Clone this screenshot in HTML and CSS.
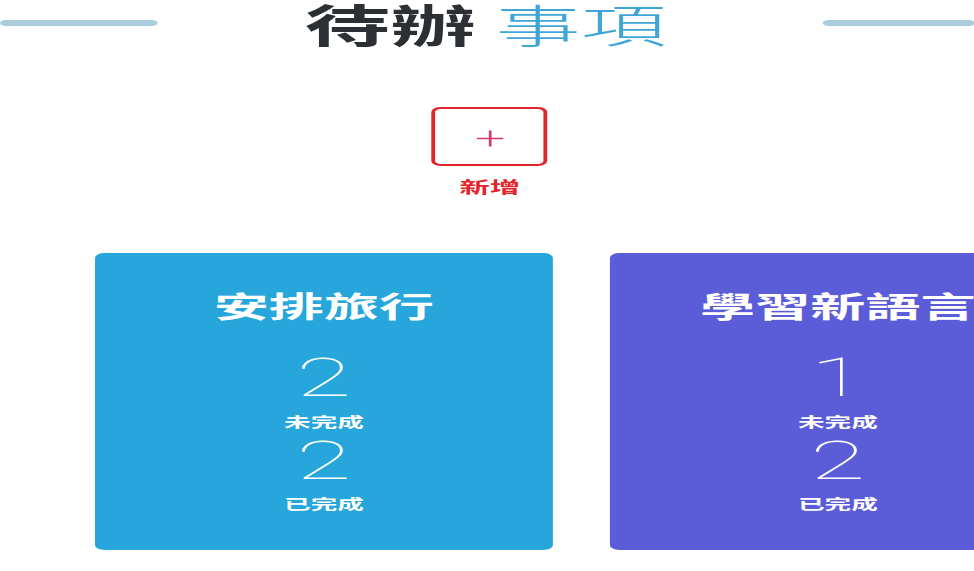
FILE: index.html
```html
<!DOCTYPE html>
<html lang="zh-Hant">
<head>
<meta charset="utf-8">
<title>待辦事項</title>
<link rel="stylesheet" href="styles.css">
</head>
<body>
<div class="stage">
  <header class="hd">
    <span class="rule"></span>
    <h1 class="title"><span class="t-strong">待辦</span> <span class="t-light">事項</span></h1>
    <span class="rule rule-right"></span>
  </header>

  <div class="add">
    <button class="add-btn" type="button" aria-label="新增">
      <svg class="plus" viewBox="0 0 14 17" width="14" height="17">
        <line x1="0" y1="8.5" x2="14" y2="8.5"/>
        <line x1="7" y1="0.5" x2="7" y2="16.5"/>
      </svg>
    </button>
    <div class="add-label">新增</div>
  </div>

  <div class="cards">
    <section class="card card-blue">
      <h2 class="card-title">安排旅行</h2>
      <div class="num">2</div>
      <div class="lbl">未完成</div>
      <div class="num num-2">2</div>
      <div class="lbl lbl-2">已完成</div>
    </section>
    <section class="card card-indigo">
      <h2 class="card-title">學習新語言</h2>
      <div class="num">1</div>
      <div class="lbl">未完成</div>
      <div class="num num-2">2</div>
      <div class="lbl lbl-2">已完成</div>
    </section>
  </div>
</div>
</body>
</html>
```

FILE: styles.css
```css
html, body {
  margin: 0;
  padding: 0;
  background: #ffffff;
  overflow: hidden;
}

body {
  width: 974px;
  height: 571px;
  font-family: "Noto Sans CJK TC", "Noto Sans", sans-serif;
}

.stage {
  width: 512.6px;
  transform: scaleX(1.9);
  transform-origin: 0 0;
}

/* header */
.hd {
  display: flex;
  align-items: center;
  justify-content: space-between;
  height: 46px;
}

.rule {
  display: block;
  width: 83px;
  height: 6px;
  border-radius: 3px;
  background: #a9cddc;
}

.rule-right {
  width: 79.5px;
}

.title {
  margin: 0 5px 0 0;
  padding-top: 1px;
  font-size: 45px;
  line-height: 46px;
  font-weight: 700;
  white-space: nowrap;
}

.t-strong {
  color: #2c3034;
  font-weight: 700;
}

.t-light {
  color: #3fa5d6;
  font-weight: 300;
}

/* add button */
.add {
  display: flex;
  flex-direction: column;
  align-items: center;
  margin-top: 61px;
  padding-left: 3px;
}

.add-btn {
  box-sizing: border-box;
  width: 61px;
  height: 59px;
  padding: 0;
  border: 2px solid #e1262b;
  border-radius: 5px;
  background: #ffffff;
  display: flex;
  align-items: center;
  justify-content: center;
}

.plus {
  display: block;
  stroke: #d8376b;
  stroke-width: 1.4;
  margin-top: 3px;
}

.add-label {
  margin-top: 10px;
  font-size: 16px;
  line-height: 20px;
  font-weight: 700;
  color: #e1262b;
}

/* cards */
.cards {
  display: flex;
  gap: 29.5px;
  margin-top: 57px;
  padding-left: 50px;
}

.card {
  flex: 0 0 241px;
  box-sizing: border-box;
  height: 297px;
  border-radius: 5px;
  padding-top: 32px;
  display: flex;
  flex-direction: column;
  align-items: center;
  color: #ffffff;
}

.card-blue {
  background: #26a6da;
}

.card-indigo {
  background: #5b5cd7;
}

.card-title {
  margin: 0;
  font-size: 29px;
  line-height: 40px;
  font-weight: 700;
  white-space: nowrap;
}

.num {
  margin-top: 27px;
  font-family: "Roboto", "Inter", sans-serif;
  font-weight: 100;
  font-size: 53px;
  line-height: 53px;
}

.num-2 {
  margin-top: 5px;
}

.lbl {
  margin-top: 7px;
  font-size: 14px;
  line-height: 18px;
  font-weight: 700;
}

.lbl-2 {
  margin-top: 6px;
}
```
